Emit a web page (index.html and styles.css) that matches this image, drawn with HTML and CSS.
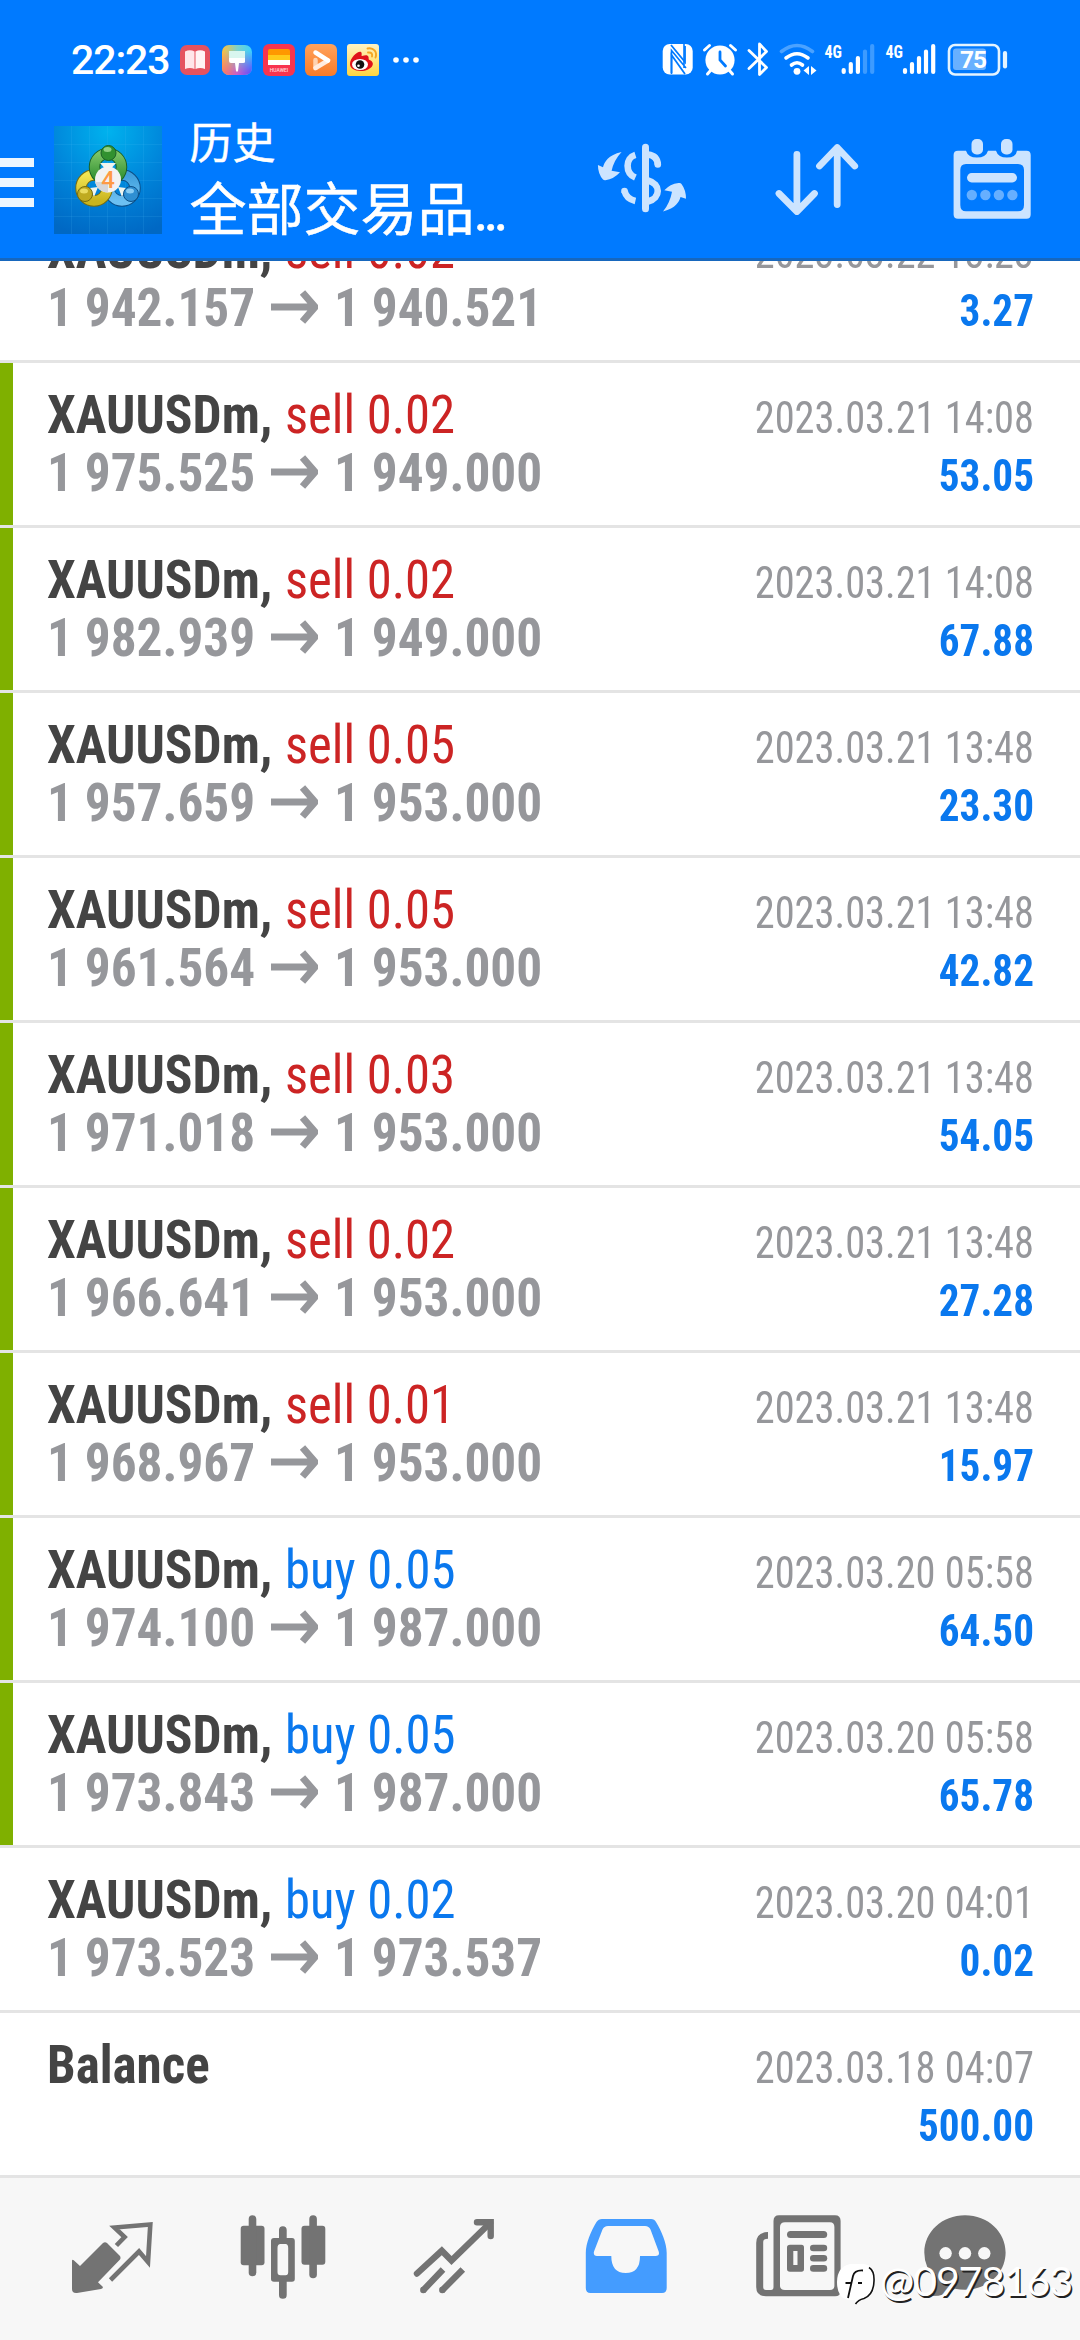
FILE: index.html
```html
<!DOCTYPE html>
<html lang="zh-CN">
<head>
<meta charset="utf-8">
<title>历史</title>
<link rel="stylesheet" href="styles.css">
</head>
<body>
<svg class="defs" width="0" height="0" aria-hidden="true">
  <symbol id="arrow" viewBox="0 0 47 34"><path d="M0 17H42M31.500 2.500 44 17 31.500 31.500" fill="none" stroke="#96979b" stroke-width="7"/></symbol>
</svg>
<div class="screen">
<header class="header">
  <div class="status">
    <div class="status-left">
      <span class="time">22:23</span>
      <svg class="app" width="32" height="32" viewBox="0 0 32 32"><rect x="1" y="1" width="30" height="30" rx="7" fill="#e5525f"/><path d="M6 7.500Q11 5 15.500 7.500V25Q11 23 6 25Z" fill="#ffe6ea"/><path d="M16.500 7.500Q21 5 26 7.500V25Q21 23 16.500 25Z" fill="#fff4f5"/></svg>
      <svg class="app" width="32" height="32" viewBox="0 0 32 32"><defs><linearGradient id="br" x1="0" y1="0" x2="1" y2="0"><stop offset="0" stop-color="#ffc13c"/><stop offset=".5" stop-color="#7fd0c8"/><stop offset="1" stop-color="#3ad2ff"/></linearGradient><linearGradient id="br2" x1="0" y1="0" x2="1" y2="0"><stop offset="0" stop-color="#ff7a5c"/><stop offset=".5" stop-color="#c860c8"/><stop offset="1" stop-color="#5a50ff"/></linearGradient><linearGradient id="fade" x1="0" y1="0" x2="0" y2="1"><stop offset=".2" stop-color="#000"/><stop offset=".9" stop-color="#fff"/></linearGradient><mask id="mk"><rect width="32" height="32" fill="url(#fade)"/></mask></defs><rect x="1" y="1" width="30" height="30" rx="7" fill="url(#br)"/><rect x="1" y="1" width="30" height="30" rx="7" fill="url(#br2)" mask="url(#mk)"/><path d="M8 7H24V14H8Z" fill="#d9f6ef"/><path d="M8 14H24V18Q24 19 22 19H18L17 27Q16 28.500 15 27L14 19H10Q8 19 8 17Z" fill="#fff"/></svg>
      <svg class="app" width="32" height="32" viewBox="0 0 32 32"><rect width="32" height="32" rx="6" fill="#f8344f"/><path d="M5 7Q5 5 7 5H25Q27 5 27 7V11H5Z" fill="#ff9800"/><path d="M5 11H27V16H5Z" fill="#ffca1a"/><path d="M5 16H27V21H5Z" fill="#fff"/><text x="16" y="28" font-size="5" font-weight="500" text-anchor="middle" fill="#ffd9de" font-family="Roboto, sans-serif">HUAWEI</text></svg>
      <svg class="app" width="32" height="32" viewBox="0 0 32 32"><defs><linearGradient id="pl" x1="0" y1="0" x2="0" y2="1"><stop offset="0" stop-color="#ffa25c"/><stop offset="1" stop-color="#f97b28"/></linearGradient></defs><rect width="32" height="32" rx="6" fill="url(#pl)"/><path d="M10.500 16V24" stroke="#ffd2b0" stroke-width="4.500" stroke-linecap="round"/><path d="M23 16.500 10.500 24" stroke="#ffece0" stroke-width="4.500" stroke-linecap="round"/><path d="M10.500 8.500 23 16.500" stroke="#fff" stroke-width="4.500" stroke-linecap="round"/></svg>
      <svg class="app" width="32" height="32" viewBox="0 0 32 32"><defs><linearGradient id="wb" x1="0" y1="0" x2="0" y2="1"><stop offset="0" stop-color="#fff3c4"/><stop offset="1" stop-color="#ffd540"/></linearGradient></defs><rect width="32" height="32" rx="3" fill="url(#wb)"/><path d="M3 20C3 13 12 6 14 8 15.500 9.500 14 12 15 12 18 11 21 10.500 21.500 13 22 15 21 15.500 22.500 16 30 19 24 27 14 27 7 27 3 24 3 20Z" fill="#e0121a"/><ellipse cx="13" cy="20.500" rx="8" ry="5.500" fill="#fff"/><circle cx="13" cy="20.500" r="4.300" fill="#111"/><circle cx="11.500" cy="21.800" r="1.300" fill="#fff"/><path d="M20.500 4.500C26.500 3 30.500 8 28.500 13.500M21 8.500Q26 8 25 12.500" fill="none" stroke="#f5a623" stroke-width="1.900" stroke-linecap="round"/></svg>
      <svg class="more" width="26" height="8" viewBox="0 0 26 8" fill="#fff"><circle cx="3" cy="4" r="2.800"/><circle cx="13" cy="4" r="2.800"/><circle cx="23" cy="4" r="2.800"/></svg>
    </div>
    <svg class="signals" width="350" height="40" viewBox="660 40 350 40">
      <rect x="662.700" y="44" width="30" height="30.500" rx="7" fill="#fff"/>
      <path d="M671 45 685 62V46M685 74 671.500 55V73" fill="none" stroke="#007aff" stroke-width="1.800"/>
      <path d="M671.500 74V50.500L686 68M684 44V68" fill="none" stroke="#007aff" stroke-width="1.600"/>
      <circle cx="720" cy="60" r="14.600" fill="#fff"/><path d="M720 52V60L725.500 66" fill="none" stroke="#007aff" stroke-width="2.800" stroke-linecap="round"/>
      <path d="M704.500 50 709.500 45.500M735.500 50 730.500 45.500M707.500 74 711 70M732.500 74 729 70" stroke="#fff" stroke-width="3" stroke-linecap="round"/>
      <path d="M749 50.500 766.500 67.500 759.500 74.500V44L766.500 51.500 749 68.500" fill="none" stroke="#fff" stroke-width="2.800" stroke-linecap="round" stroke-linejoin="round"/>
      <g fill="none" stroke="#fff" stroke-width="3.600" stroke-linecap="round"><path d="M781.500 51.500Q797 39.500 812.500 51.500" stroke="#4ba2ff"/><path d="M786 58Q797 49.500 808 58M791.500 65Q797 60.500 802.500 65"/></g>
      <circle cx="797" cy="71.300" r="3.400" fill="#fff"/><path d="M803.500 70.500 809 66V75ZM811 66 816.500 70.500 811 75Z" fill="#fff"/>
      <g font-family="Roboto Condensed, Roboto, sans-serif" font-size="19" font-weight="700" fill="#fff"><text x="824.500" y="57.500" textLength="17.500" lengthAdjust="spacingAndGlyphs">4G</text><text x="885.500" y="57.500" textLength="17.500" lengthAdjust="spacingAndGlyphs">4G</text></g>
      <g stroke="#fff" stroke-width="4.200" stroke-linecap="round"><path d="M843.700 70V72M850.800 64V72M857.900 58V72M905 70V72M912 64V72M919 58V72M926 51.500V72M933.200 46V72"/><path d="M865 51.500V72M872.200 46V72" stroke="#3d9bff"/></g>
      <rect x="949" y="45" width="50" height="29.500" rx="6" fill="none" stroke="#e4f4ff" stroke-width="2.600"/>
      <rect x="953" y="48.500" width="33" height="21.500" rx="3" fill="#68b0ff"/>
      <path d="M1005 53V66.500" stroke="#e4f4ff" stroke-width="4.200" stroke-linecap="round"/>
      <text x="960" y="68.300" font-family="Roboto, sans-serif" font-size="24.500" font-weight="700" fill="#fff" textLength="27">75</text>
    </svg>
  </div>
  <div class="toolbar">
    <div class="menu"><i></i><i></i><i></i></div>
    <svg class="logo" width="108" height="108" viewBox="0 0 108 108">
      <defs><radialGradient id="lg" cx=".5" cy=".05" r="1"><stop offset="0" stop-color="#00b2ee"/><stop offset=".55" stop-color="#0084da"/><stop offset="1" stop-color="#0068c4"/></radialGradient>
      <linearGradient id="gg" x1="0" y1="0" x2="0" y2="1"><stop offset="0" stop-color="#7cc466"/><stop offset="1" stop-color="#2c8d2e"/></linearGradient>
      <linearGradient id="gy" x1="0" y1="0" x2="0" y2="1"><stop offset="0" stop-color="#f2e552"/><stop offset="1" stop-color="#c9b41e"/></linearGradient>
      <linearGradient id="gb" x1="0" y1="0" x2="0" y2="1"><stop offset="0" stop-color="#3f9fdc"/><stop offset="1" stop-color="#6cc0f2"/></linearGradient></defs>
      <rect width="108" height="108" fill="url(#lg)"/>
      <path d="M17.500 0V108M35.500 0V108M53.500 0V108M71.500 0V108M89.500 0V108M0 18.500H108M0 36.500H108M0 54.500H108M0 72.500H108M0 90.500H108" stroke="#4fc0f5" stroke-opacity=".14" stroke-width="1"/>
      <g fill="none"><circle cx="68" cy="62" r="13" stroke="#0c4f87" stroke-width="11.500"/><circle cx="68" cy="62" r="13" stroke="url(#gb)" stroke-width="9.500"/>
      <circle cx="40" cy="62" r="13" stroke="#756c12" stroke-width="11.500"/><circle cx="40" cy="62" r="13" stroke="url(#gy)" stroke-width="9.500"/>
      <circle cx="54" cy="41" r="13.500" stroke="#1b6127" stroke-width="11.500"/><circle cx="54" cy="41" r="13.500" stroke="url(#gg)" stroke-width="9.500"/></g>
      <path d="M46 37 54 46 62 37ZM36 62 44 61 40 71ZM72 62 64 61 68 71Z" fill="#f0f5ee"/>
      <circle cx="54.500" cy="27" r="7.500" fill="#31912f" stroke="#1b6127"/><ellipse cx="53.500" cy="23.500" rx="4" ry="2.500" fill="#8fd084"/>
      <circle cx="31" cy="68" r="7.500" fill="#bfaa20" stroke="#756c12"/><ellipse cx="30" cy="65" rx="4" ry="2.500" fill="#eadb60"/>
      <circle cx="77" cy="68" r="7.500" fill="#2f8fd2" stroke="#0c4f87"/><ellipse cx="76" cy="65" rx="4" ry="2.500" fill="#88ccf4"/>
      <circle cx="54" cy="53.500" r="13" fill="#f2f2f3"/><path d="M41 56H54V66.500A13 13 0 0 1 41 56Z" fill="#d6d6da"/>
      <text x="54" y="62" text-anchor="middle" font-family="Roboto, sans-serif" font-size="24" font-weight="500" fill="#ff9a45">4</text>
    </svg>
    <div class="titles">
      <h1>历史</h1>
      <p>全部交易品<span>...</span></p>
    </div>
    <svg class="tools" width="450" height="100" viewBox="590 130 450 100" fill="#cce4ff">
      <path d="M621.600 152C608 155 604.500 162 603 167.200L597.900 165Q598 174 603 179.500Q604 180.500 605.400 180.300Q614 179 620 172.300L611.600 170.700Q614 160 621.600 152Z"/>
      <path d="M663 211.500C676 208 679 202 680.500 197L686 198.800Q686 190 681.500 184Q680.500 182.500 678.500 183Q670 184 664.300 190.300L672 191.700Q670 203 663 211.500Z"/>
      <g fill="none" stroke="#cce4ff" stroke-width="6.600"><path d="M645.500 147.300V208.700" stroke-linecap="round" stroke-width="7"/><path d="M635.400 154.800C625 158 625 173 635.400 177.600M648 154.500C655.500 155.500 657.600 160 657.800 164.500M624.500 191Q626.500 199 635.400 201M648 180.500C661 184 661 198 648 201.500"/></g>
      <circle cx="657.800" cy="164.500" r="3.300"/><circle cx="624.500" cy="191" r="3.300"/>
      <g fill="none" stroke="#cce4ff" stroke-width="6.800" stroke-linecap="round" stroke-linejoin="round"><path d="M796.900 154.500V211M779 193.500 796.900 211.500 814.500 193.500M837.200 204.500V148M819.500 166 837.200 147.500 854.700 166"/></g>
      <path fill-rule="evenodd" d="M958 150.700H966Q968 157.500 977 157.500T988 150.700H996Q998 157.500 1007 157.500T1017 150.700H1026.500Q1030.700 150.700 1030.700 155V214.500Q1030.700 218.700 1026.500 218.700H958Q953.600 218.700 953.600 214.500V155Q953.600 150.700 958 150.700ZM966 164Q960.300 164 960.300 170V205Q960.300 211.300 966 211.300H1018Q1024 211.300 1024 205V170Q1024 164 1018 164Z"/>
      <rect x="971.500" y="139" width="11.500" height="15.500" rx="5"/><rect x="1001" y="139" width="11.500" height="15.500" rx="5"/>
      <rect x="967" y="173" width="50" height="9.400" rx="4.700"/>
      <g fill="#66afff"><circle cx="971.800" cy="195" r="5.200"/><circle cx="985.400" cy="195" r="5.200"/><circle cx="998.900" cy="195" r="5.200"/><circle cx="1012.400" cy="195" r="5.200"/></g>
    </svg>
  </div>
</header>

<main class="list">
  <div class="row"><i class="bar"></i><div class="deal"><div class="line1"><b>XAUUSDm,</b><span class="sell">sell 0.02</span></div><div class="line2"><span>1 942.157</span><svg width="47" height="34"><use href="#arrow"/></svg><span>1 940.521</span></div></div><div class="result"><time>2023.03.22 13:23</time><strong>3.27</strong></div></div>
  <div class="row closed"><i class="bar"></i><div class="deal"><div class="line1"><b>XAUUSDm,</b><span class="sell">sell 0.02</span></div><div class="line2"><span>1 975.525</span><svg width="47" height="34"><use href="#arrow"/></svg><span>1 949.000</span></div></div><div class="result"><time>2023.03.21 14:08</time><strong>53.05</strong></div></div>
  <div class="row closed"><i class="bar"></i><div class="deal"><div class="line1"><b>XAUUSDm,</b><span class="sell">sell 0.02</span></div><div class="line2"><span>1 982.939</span><svg width="47" height="34"><use href="#arrow"/></svg><span>1 949.000</span></div></div><div class="result"><time>2023.03.21 14:08</time><strong>67.88</strong></div></div>
  <div class="row closed"><i class="bar"></i><div class="deal"><div class="line1"><b>XAUUSDm,</b><span class="sell">sell 0.05</span></div><div class="line2"><span>1 957.659</span><svg width="47" height="34"><use href="#arrow"/></svg><span>1 953.000</span></div></div><div class="result"><time>2023.03.21 13:48</time><strong>23.30</strong></div></div>
  <div class="row closed"><i class="bar"></i><div class="deal"><div class="line1"><b>XAUUSDm,</b><span class="sell">sell 0.05</span></div><div class="line2"><span>1 961.564</span><svg width="47" height="34"><use href="#arrow"/></svg><span>1 953.000</span></div></div><div class="result"><time>2023.03.21 13:48</time><strong>42.82</strong></div></div>
  <div class="row closed"><i class="bar"></i><div class="deal"><div class="line1"><b>XAUUSDm,</b><span class="sell">sell 0.03</span></div><div class="line2"><span>1 971.018</span><svg width="47" height="34"><use href="#arrow"/></svg><span>1 953.000</span></div></div><div class="result"><time>2023.03.21 13:48</time><strong>54.05</strong></div></div>
  <div class="row closed"><i class="bar"></i><div class="deal"><div class="line1"><b>XAUUSDm,</b><span class="sell">sell 0.02</span></div><div class="line2"><span>1 966.641</span><svg width="47" height="34"><use href="#arrow"/></svg><span>1 953.000</span></div></div><div class="result"><time>2023.03.21 13:48</time><strong>27.28</strong></div></div>
  <div class="row closed"><i class="bar"></i><div class="deal"><div class="line1"><b>XAUUSDm,</b><span class="sell">sell 0.01</span></div><div class="line2"><span>1 968.967</span><svg width="47" height="34"><use href="#arrow"/></svg><span>1 953.000</span></div></div><div class="result"><time>2023.03.21 13:48</time><strong>15.97</strong></div></div>
  <div class="row closed"><i class="bar"></i><div class="deal"><div class="line1"><b>XAUUSDm,</b><span class="buy">buy 0.05</span></div><div class="line2"><span>1 974.100</span><svg width="47" height="34"><use href="#arrow"/></svg><span>1 987.000</span></div></div><div class="result"><time>2023.03.20 05:58</time><strong>64.50</strong></div></div>
  <div class="row closed"><i class="bar"></i><div class="deal"><div class="line1"><b>XAUUSDm,</b><span class="buy">buy 0.05</span></div><div class="line2"><span>1 973.843</span><svg width="47" height="34"><use href="#arrow"/></svg><span>1 987.000</span></div></div><div class="result"><time>2023.03.20 05:58</time><strong>65.78</strong></div></div>
  <div class="row"><i class="bar"></i><div class="deal"><div class="line1"><b>XAUUSDm,</b><span class="buy">buy 0.02</span></div><div class="line2"><span>1 973.523</span><svg width="47" height="34"><use href="#arrow"/></svg><span>1 973.537</span></div></div><div class="result"><time>2023.03.20 04:01</time><strong>0.02</strong></div></div>
  <div class="row"><i class="bar"></i><div class="deal"><div class="line1"><b class="balance">Balance</b></div></div><div class="result"><time>2023.03.18 04:07</time><strong>500.00</strong></div></div>
</main>

<nav class="tabs">
  <svg viewBox="67 2210 91 91"><path d="M72 2260.500Q72.500 2259 74 2260.500L80 2266 103 2243Q105 2241.500 107 2243L120 2256Q121 2258 120 2259.500L98 2282.300 103 2287Q103 2288.700 101 2289L77 2293Q72 2293.500 72 2289Z"/><path d="M116.400 2245.500 124.600 2237 114.500 2227.500 150.300 2224.500 148 2262 139 2251.500 110.500 2280" fill="none" stroke="#737373" stroke-width="4.600"/></svg>
  <svg viewBox="238 2210 91 91"><rect x="240.700" y="2225.700" width="23.800" height="39.500" rx="3"/><rect x="248.700" y="2215.300" width="7.600" height="61" rx="3.800"/><rect x="301.500" y="2225.700" width="23.800" height="39" rx="3"/><rect x="309.300" y="2215.300" width="7.600" height="63" rx="3.800"/><path fill-rule="evenodd" d="M279 2238V2230A3.800 3.800 0 0 1 286.700 2230V2238H292Q294.800 2238 294.800 2241V2279Q294.800 2281.700 292 2281.700H286.700V2295A3.800 3.800 0 0 1 279 2295V2281.700H274Q271 2281.700 271 2279V2241Q271 2238 274 2238ZM280.500 2244Q277.500 2244 277.500 2248V2272Q277.500 2275.300 280.500 2275.300H285.500Q288.200 2275.300 288.200 2272V2248Q288.200 2244 285.500 2244Z"/></svg>
  <svg viewBox="409 2210 91 91"><g fill="none" stroke="#737373" stroke-width="6.400"><path d="M417 2273.500 441.800 2250.800 451.500 2260.500 490 2223" stroke-linecap="round"/><path d="M477 2222.300H490.700V2236" stroke-linecap="round"/><path d="M423 2290.500 443 2269.500M442 2290.500 462.800 2269.500"/></g><circle cx="423.300" cy="2290" r="3.200"/><circle cx="442.300" cy="2290" r="3.200"/></svg>
  <svg viewBox="580 2210 91 91"><path fill="#449cff" fill-rule="evenodd" d="M602 2219H651Q654.500 2219 656 2222C661.500 2231 666.700 2243 666.700 2253V2288Q666.700 2293 662 2293H590.500Q585.800 2293 585.800 2288V2253C585.800 2243 591 2231 596.500 2222Q598.500 2219 602 2219ZM608 2226Q604 2226 602.500 2229.500L594 2251.500Q593 2256 597 2256H611.300Q611.300 2273 625.700 2273T640 2256H655.500Q660 2256 658.700 2251.500L650.500 2229.500Q649 2226 645 2226Z"/></svg>
  <svg viewBox="751 2210 91 91"><path fill-rule="evenodd" d="M779 2215.300H835Q840.600 2215.300 840.600 2221V2291Q840.600 2296.300 835 2296.300H766Q756.200 2296.300 756.200 2287V2243Q756.200 2232.500 768 2232V2238.700Q763.200 2238.700 763.200 2242V2287Q763.200 2290 766 2290H771Q773.500 2290 773.500 2287V2221Q773.500 2215.300 779 2215.300ZM785 2222.300Q780 2222.300 780 2227V2285.500Q780 2290 785 2290H830Q834.400 2290 834.400 2285.500V2227Q834.400 2222.300 830 2222.300Z"/><rect x="787" y="2231" width="40.200" height="7" rx="3.500"/><path fill-rule="evenodd" d="M790 2244.700H801.500Q804 2244.700 804 2247.500V2269Q804 2271.700 801.500 2271.700H790Q787 2271.700 787 2269V2247.500Q787 2244.700 790 2244.700ZM793.300 2251V2265H797.500V2251Z"/><rect x="810" y="2244.700" width="17.200" height="6.600" rx="3.300"/><rect x="810" y="2254.900" width="17.200" height="6.600" rx="3.300"/><rect x="810" y="2265.100" width="17.200" height="6.600" rx="3.300"/></svg>
  <svg viewBox="922 2210 91 91"><path d="M965 2215.300C988 2215.300 1005.600 2232 1005.600 2252.500S988 2289.700 965 2289.700Q960 2289.700 955 2288.700Q944 2297 929 2296Q937 2288 936 2279Q924.300 2268 924.300 2252.500C924.300 2232 942 2215.300 965 2215.300Z"/><g fill="#f7f7f7"><circle cx="945.600" cy="2253.300" r="6.200"/><circle cx="965" cy="2253.300" r="6.200"/><circle cx="984.300" cy="2253.300" r="6.200"/></g></svg>
</nav>
<div class="watermark">
  <svg width="42" height="46" viewBox="0 0 42 46"><path d="M14 3H28Q40 5 39.500 18 39.500 34 29 38 22 40 20 45L19 39H12Q1 37 1 21 1 6 14 3Z" fill="#fff"/><path d="M33 6.500Q38.500 10 38 20 37.500 34 28 37.500 22 39 19.500 43" fill="none" stroke="#111" stroke-width="1.600"/><path d="M12 37 17 15Q18.500 9 27 9.500M9.500 22H15M22 22H26" fill="none" stroke="#111" stroke-width="1.800"/></svg>
  <span>@0978163</span>
</div>
</div>
</body>
</html>
```
FILE: styles.css
```css
* { box-sizing: border-box; }
body { margin: 0; background: #fff; font-family: "Roboto Condensed", Roboto, "Noto Sans CJK SC", sans-serif; }
svg { display: block; flex: none; }
.defs { position: absolute; }
.screen { position: relative; width: 1080px; height: 2340px; overflow: hidden; display: flex; flex-direction: column; }

.header { height: 261px; flex: none; background: #007aff; border-bottom: 3px solid #1767bd; }
.status { height: 113px; padding: 40px 70px 0 71px; display: flex; justify-content: space-between; align-items: flex-start; }
.status-left { display: flex; align-items: center; height: 40px; }
.time { width: 108px; font: 500 41px/40px Roboto, sans-serif; letter-spacing: -1.1px; color: #fff; }
.app { margin-right: 10px; }
.more { margin-left: 4px; }
.toolbar { height: 145px; display: flex; align-items: flex-start; }
.menu { width: 34px; margin-top: 45px; display: grid; gap: 11px; }
.menu i { height: 9px; background: #edf6ff; }
.logo { margin: 13px 0 0 20px; }
.titles { width: 400px; margin: -1px 0 0 27.5px; color: #fff; font-family: "Noto Sans CJK SC", sans-serif; white-space: nowrap; -webkit-text-stroke: 0.5px #fff; }
.titles h1 { margin: 0; font-size: 43px; font-weight: 400; line-height: 56px; }
.titles p { margin: 0; font-size: 57px; line-height: 75px; }
.titles span { margin-left: -1px; font-family: Roboto, sans-serif; letter-spacing: -5px; }
.tools { margin: 17px 0 0 0.5px; }

.list { flex: none; height: 1917px; overflow: hidden; }
.row { height: 165px; display: flex; border-bottom: 3px solid #e4e4e4; }
.row:first-child { margin-top: -63px; }
.bar { width: 13px; flex: none; }
.closed .bar { background: #7fb000; }
.deal { flex: 1; padding: 22px 0 0 35px; }
.line1 { display: grid; grid-template-columns: 238px 1fr; height: 59px; margin-left: -1px; font-size: 54px; line-height: 59px; color: #444; white-space: nowrap; }
.line1 > * { transform: scaleX(0.953); transform-origin: 0 0; }
.line1 .balance { transform: scaleX(0.945); }
.line1 .sell, .line1 .buy { font-weight: 450; transform: scaleX(0.938); }
.sell { color: #cc2424; }
.buy { color: #0a78ee; }
.line2 { display: grid; grid-template-columns: 224px 63px 1fr; align-items: center; height: 57px; margin-left: -1px; font-size: 54px; font-weight: 700; line-height: 57px; color: #96979b; white-space: nowrap; }
.line2 span { transform: scaleX(0.95); transform-origin: 0 0; }
.line2 svg { margin-bottom: 2px; }
.result { width: 400px; padding: 26px 46px 0 0; text-align: right; font-size: 44px; line-height: 58px; white-space: nowrap; }
.result > * { display: block; transform-origin: 100% 0; }
.result time { font-weight: 440; color: #96979b; transform: scaleX(0.918); }
.result strong { color: #0a78ee; transform: scaleX(0.936); }

.tabs { flex: 1; padding: 32px 27px 0; display: grid; grid-template-columns: repeat(6, 171px); justify-items: center; align-items: start; background: #f7f7f7; }
.tabs svg { width: 91px; height: 91px; fill: #737373; }

.watermark { position: absolute; left: 836px; top: 2261px; display: flex; color: #fff; }
.watermark span { margin-left: 2px; margin-top: -4px; font: 400 41px/48px Lato, sans-serif; letter-spacing: -1.1px; text-shadow: 1.5px 1.5px 0 #222; }
```
